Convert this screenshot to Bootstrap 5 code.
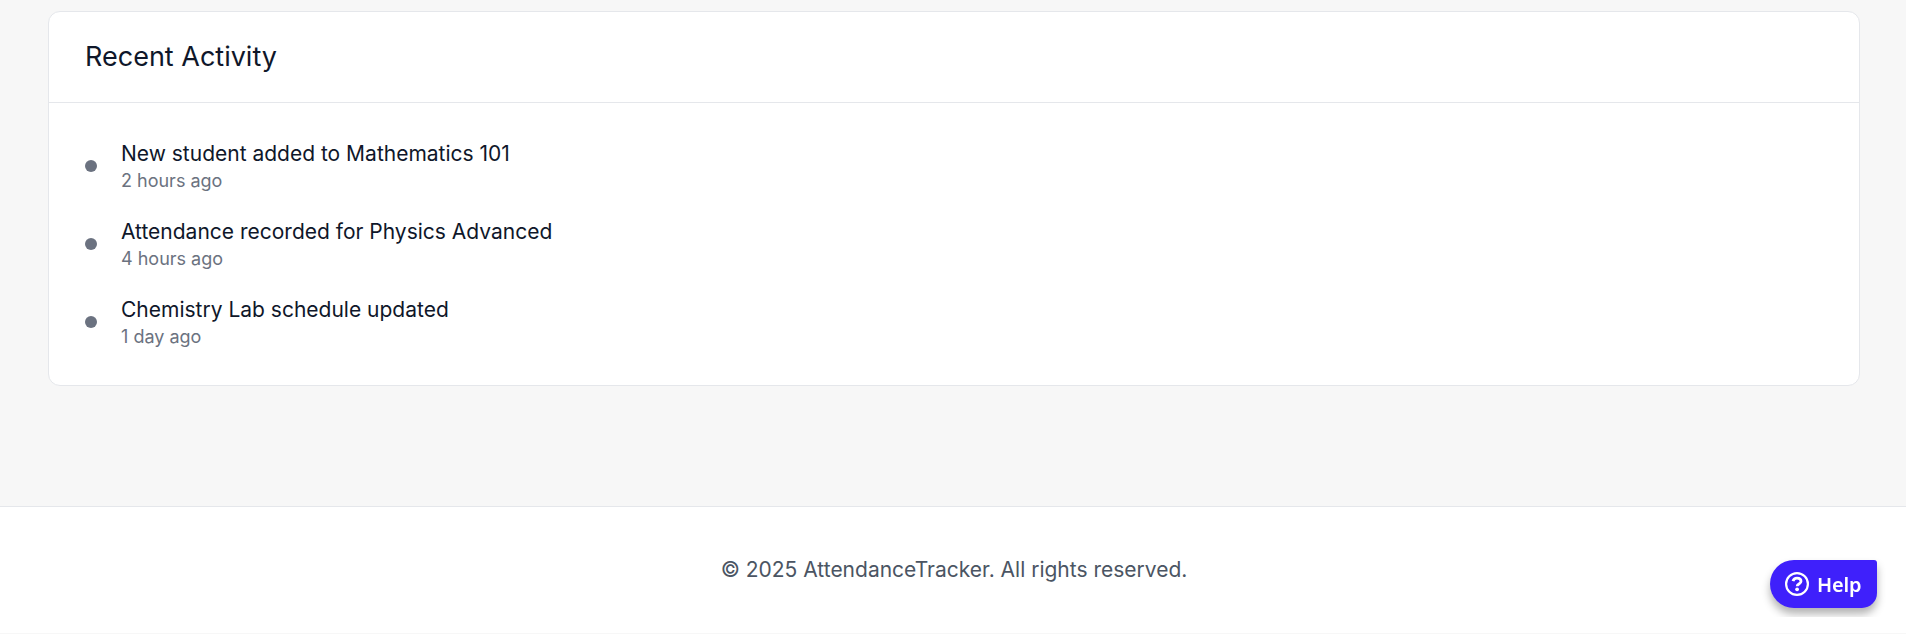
<!DOCTYPE html>
<html lang="en">
<head>
<meta charset="utf-8">
<meta name="viewport" content="width=device-width, initial-scale=1">
<title>AttendanceTracker</title>
<link href="https://cdn.jsdelivr.net/npm/bootstrap@5.3.0/dist/css/bootstrap.min.css" rel="stylesheet">
<style>
body{background:#f7f7f7;font-family:Inter,sans-serif;color:#0f172a;overflow:hidden}
main{padding:11px 46px 120px 48px}
.activity-card{border:1px solid #e5e7eb;border-radius:12px}
.activity-card .card-header{padding:24px 36px;border-bottom:1px solid #e5e7eb}
.activity-title{font-size:27px;line-height:42px;font-weight:400}
.activity-card .card-body{padding:36px}
.activity-list,.activity-item{gap:24px}
.dot{width:12px;height:12px;background:#6b7280}
.what{font-size:21px;line-height:30px}
.when{font-size:18px;line-height:24px;color:#6b7280}
footer{border-top:1px solid #e5e7eb;padding:48px 0 48px 2px;font-size:21px;line-height:30px;color:#4b5563}
.help-clip{position:fixed;right:14px;bottom:17px;padding:15px 15px 9px;overflow:hidden}
.help-btn{width:107px;height:48px;padding:0 0 0 15px;gap:8px;border:0;border-radius:24px 3px 15px 24px;background:#3f20fb;color:#fff;font:600 20px/48px "Noto Sans",sans-serif;box-shadow:0 6px 8px rgba(0,0,0,.3)}
.help-label{padding-top:2px;letter-spacing:-.2px}
</style>
</head>
<body>
<main>
  <section class="card activity-card">
    <div class="card-header bg-transparent"><h2 class="activity-title m-0">Recent Activity</h2></div>
    <div class="card-body">
      <ul class="activity-list list-unstyled d-flex flex-column m-0">
        <li class="activity-item d-flex align-items-center"><span class="dot rounded-circle"></span><div><div class="what">New student added to Mathematics 101</div><div class="when">2 hours ago</div></div></li>
        <li class="activity-item d-flex align-items-center"><span class="dot rounded-circle"></span><div><div class="what">Attendance recorded for Physics Advanced</div><div class="when">4 hours ago</div></div></li>
        <li class="activity-item d-flex align-items-center"><span class="dot rounded-circle"></span><div><div class="what">Chemistry Lab schedule updated</div><div class="when">1 day ago</div></div></li>
      </ul>
    </div>
  </section>
</main>
<footer class="bg-white text-center">© 2025 AttendanceTracker. All rights reserved.</footer>
<div class="help-clip">
  <button type="button" class="help-btn d-flex align-items-center">
    <svg width="24" height="24" viewBox="0 0 24 24" fill="none" stroke="#fff"><circle cx="12" cy="12" r="10.9" stroke-width="2.2"/><path d="M8 9.2C8.6 7.1 10.1 6.1 12 6.1c2.3 0 4 1.3 4 3.2 0 2.8-3.8 2.5-3.8 4.9" stroke-width="2.8"/><circle cx="12.1" cy="17.3" r="1.9" fill="#fff" stroke="none"/></svg>
    <span class="help-label">Help</span>
  </button>
</div>
<script src="https://cdn.jsdelivr.net/npm/bootstrap@5.3.0/dist/js/bootstrap.bundle.min.js"></script>
</body>
</html>
